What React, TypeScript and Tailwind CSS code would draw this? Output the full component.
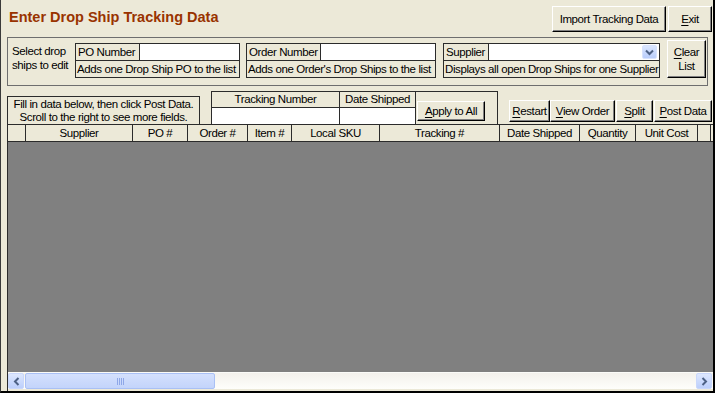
import React from "react";

const UI_FONT = "font-['Liberation_Sans',Arial,sans-serif] text-[11.5px] tracking-[-0.4px]";

type BtnProps = {
  className?: string;
  children: React.ReactNode;
};

const Btn = ({ className = "", children }: BtnProps) => (
  <button
    className={`flex shrink-0 flex-col items-center justify-center whitespace-nowrap border border-b-black border-l-white border-r-black border-t-white bg-[#ECE9D8] leading-[14px] text-black shadow-[inset_-1px_-1px_0_#808080] ${className}`}
  >
    {children}
  </button>
);

const Key = ({ children }: { children: React.ReactNode }) => (
  <span className="underline underline-offset-[2px]">{children}</span>
);

type LookupProps = {
  label: string;
  labelWidth: string;
  hint: string;
  width: string;
  combo?: boolean;
};

const Lookup = ({ label, labelWidth, hint, width, combo }: LookupProps) => (
  <div className={`mt-[5px] flex h-[35px] shrink-0 flex-col border border-[#2b2b2b] ${width}`}>
    <div className="flex h-[17px] border-b border-[#2b2b2b]">
      <div className={`${labelWidth} whitespace-nowrap border-r border-[#2b2b2b] px-[2px] leading-[16px]`}>{label}</div>
      <div className="flex flex-1 items-center justify-end bg-white">
        {combo && (
          <div className="mr-[2px] flex h-[14px] w-[15px] items-center justify-center rounded-[2px] border border-[#d7e2fd] bg-gradient-to-b from-[#dbe6fe] to-[#b9cdfb]">
            <svg width="9" height="7" viewBox="0 0 9 7">
              <polyline points="1,1.5 4.5,5 8,1.5" fill="none" stroke="#4d6185" strokeWidth="2" />
            </svg>
          </div>
        )}
      </div>
    </div>
    <div className="overflow-hidden whitespace-nowrap px-[1px] leading-[16px]">{hint}</div>
  </div>
);

const columns = [
  { label: "", w: "w-[18px]" },
  { label: "Supplier", w: "w-[107px]" },
  { label: "PO #", w: "w-[55px]" },
  { label: "Order #", w: "w-[60px]" },
  { label: "Item #", w: "w-[44px]" },
  { label: "Local SKU", w: "w-[88px]" },
  { label: "Tracking #", w: "w-[120px]" },
  { label: "Date Shipped", w: "w-[80px]" },
  { label: "Quantity", w: "w-[56px]" },
  { label: "Unit Cost", w: "w-[62px]" },
  { label: "", w: "w-[13px]" },
];

const ScrollArrow = ({ dir }: { dir: "left" | "right" }) => (
  <div className="flex h-[16px] w-[16px] shrink-0 items-center justify-center rounded-[2px] border border-[#c9d7fb] bg-gradient-to-b from-[#dde7fe] to-[#bccffb]">
    <svg width="7" height="9" viewBox="0 0 7 9">
      <polyline
        points={dir === "left" ? "5.5,1 2,4.5 5.5,8" : "1.5,1 5,4.5 1.5,8"}
        fill="none"
        stroke="#4d6185"
        strokeWidth="2"
      />
    </svg>
  </div>
);

const App = () => {
  return (
    <div
      className={`flex h-[393px] w-[715px] flex-col overflow-hidden border-b-2 border-l border-r-2 border-b-black border-l-[#3a3a3a] border-r-black bg-[#ECE9D8] text-black ${UI_FONT}`}
    >
      {/* title bar */}
      <div className="flex h-[37px] shrink-0">
        <h1 className="ml-[8px] mt-[8px] text-[14.5px] font-bold leading-[18px] tracking-normal text-[#993300]">
          Enter Drop Ship Tracking Data
        </h1>
        <div className="ml-auto mr-[1px] mt-[6px] flex h-[26px] gap-[2px]">
          <Btn className="w-[114px]">Import Tracking Data</Btn>
          <Btn className="w-[44px]">
            <span>
              <Key>E</Key>xit
            </span>
          </Btn>
        </div>
      </div>

      {/* select frame */}
      <div className="ml-[6px] flex h-[49px] w-[701px] shrink-0 border border-[#6e6e6e]">
        <div className="ml-[4px] mt-[6px] w-[63px] shrink-0 whitespace-nowrap leading-[14px]">
          Select drop
          <br />
          ships to edit
        </div>
        <Lookup label="PO Number" labelWidth="w-[64px]" hint="Adds one Drop Ship PO to the list" width="w-[165px]" />
        <div className="w-[6px] shrink-0" />
        <Lookup
          label="Order Number"
          labelWidth="w-[74px]"
          hint="Adds one Order's Drop Ships to the list"
          width="w-[190px]"
        />
        <div className="w-[7px] shrink-0" />
        <Lookup
          label="Supplier"
          labelWidth="w-[45px]"
          hint="Displays all open Drop Ships for one Supplier"
          width="w-[217px]"
          combo
        />
        <Btn className="ml-[7px] mt-[2px] h-[38px] w-[39px]">
          <span>
            <Key>C</Key>lear
          </span>
          <span>List</span>
        </Btn>
      </div>

      {/* entry row */}
      <div className="flex h-[38px] shrink-0">
        <div className="ml-[6px] mt-[10px] flex h-[28px] w-[193px] shrink-0 flex-col items-center border-l border-r border-t border-[#2b2b2b] pt-[1px] leading-[13px]">
          <span className="whitespace-nowrap">Fill in data below, then click Post Data.</span>
          <span className="whitespace-nowrap">Scroll to the right to see more fields.</span>
        </div>
        <div className="ml-[11px] mt-[5px] flex h-[33px] w-[287px] shrink-0 border-l border-r border-t border-[#2b2b2b]">
          <div className="flex w-[204px] flex-col border-r border-[#2b2b2b]">
            <div className="flex h-[16px] border-b border-[#2b2b2b] leading-[15px]">
              <div className="w-[128px] whitespace-nowrap border-r border-[#2b2b2b] text-center">Tracking Number</div>
              <div className="flex-1 whitespace-nowrap text-center">Date Shipped</div>
            </div>
            <div className="flex flex-1 bg-white">
              <div className="w-[128px] border-r border-[#2b2b2b]" />
              <div className="flex-1" />
            </div>
          </div>
          <Btn className="ml-[1px] mt-[9px] h-[20px] w-[68px]">
            <span>
              <Key>A</Key>pply to All
            </span>
          </Btn>
        </div>
        <div className="ml-[11px] mt-[14px] flex h-[22px]">
          <Btn className="w-[41px]">
            <span>
              <Key>R</Key>estart
            </span>
          </Btn>
          <Btn className="w-[65px]">
            <span>
              <Key>V</Key>iew Order
            </span>
          </Btn>
          <Btn className="ml-[1px] w-[37px]">
            <span>
              <Key>S</Key>plit
            </span>
          </Btn>
          <Btn className="ml-[1px] w-[58px]">
            <span>
              <Key>P</Key>ost Data
            </span>
          </Btn>
        </div>
      </div>

      {/* data grid */}
      <div className="ml-[6px] flex w-[706px] flex-1 flex-col border-l border-t border-[#2b2b2b] pb-[2px]">
        <div className="flex h-[17px] shrink-0 border-b border-[#2b2b2b]">
          {columns.map((c, i) => (
            <div
              key={i}
              className={`${c.w} shrink-0 whitespace-nowrap border-r border-[#2b2b2b] text-center leading-[16px]`}
            >
              {c.label}
            </div>
          ))}
        </div>
        <div className="flex-1 bg-[#808080]" />
        <div className="flex h-[17px] shrink-0 items-center border-t border-[#fbfbf8] bg-gradient-to-b from-[#f3f1ec] to-[#fefefb] pr-[1px]">
          <ScrollArrow dir="left" />
          <div className="ml-[1px] flex h-[16px] w-[190px] items-center justify-center rounded-[2px] border border-[#a9c0f5] bg-gradient-to-b from-[#d4e0fd] to-[#c3d4fb]">
            <div className="flex gap-[1px]">
              <div className="h-[7px] w-[1px] bg-[#8ea7e8]" />
              <div className="h-[7px] w-[1px] bg-[#8ea7e8]" />
              <div className="h-[7px] w-[1px] bg-[#8ea7e8]" />
              <div className="h-[7px] w-[1px] bg-[#8ea7e8]" />
            </div>
          </div>
          <div className="flex-1" />
          <ScrollArrow dir="right" />
        </div>
      </div>
    </div>
  );
};

export default App;
